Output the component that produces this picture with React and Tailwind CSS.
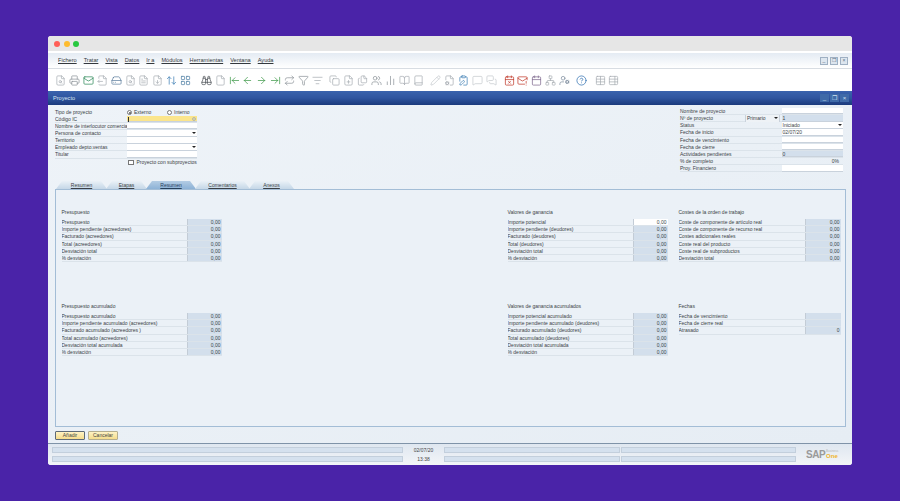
import React from 'react';
import {
  FileSearch, Printer, Mail, FileOutput, HardDrive, FileText, FileDown, ArrowUpDown, LayoutGrid, Binoculars, File,
  ArrowLeftToLine, ArrowLeft, ArrowRight, ArrowRightToLine, Repeat, Filter, ListFilter, Copy, FilePlus, Files, Users,
  BarChart2, BookOpen, Book, Pencil, FileCog, ClipboardPen, MessageSquare, MessagesSquare, CalendarX, MailWarning, Calendar,
  Network, UserCog, CircleHelp, Table, TableProperties, ChevronDown,
} from 'lucide-react';

const menu = ['Fichero', 'Tratar', 'Vista', 'Datos', 'Ir a', 'Módulos', 'Herramientas', 'Ventana', 'Ayuda'];

// toolbar groups, [icon, colour]
const gray = '#a9aeb4';
const toolbar = [
  { gap: 'ml-0', items: [[FileSearch, gray], [Printer, '#8f959b'], [Mail, '#2f8a5a'], [FileOutput, gray], [HardDrive, '#5f7f9f'], [FileSearch, gray], [FileText, gray], [FileDown, gray], [ArrowUpDown, '#3f7fb5'], [LayoutGrid, '#4f7fa5']] },
  { gap: 'ml-[7px]', items: [[Binoculars, '#4a4f55'], [File, gray], [ArrowLeftToLine, '#3f9a4a'], [ArrowLeft, '#3f9a4a'], [ArrowRight, '#3f9a4a'], [ArrowRightToLine, '#3f9a4a'], [Repeat, '#8f959b'], [Filter, '#8f959b'], [ListFilter, gray]] },
  { gap: 'ml-[4px]', items: [[Copy, gray], [FilePlus, gray], [Files, gray], [Users, '#8f959b'], [BarChart2, '#8f959b'], [BookOpen, gray], [Book, gray]] },
  { gap: 'ml-[4px]', items: [[Pencil, '#c5c9cd'], [FileCog, gray], [ClipboardPen, '#3f7fb5'], [MessageSquare, '#c5c9cd'], [MessagesSquare, '#c5c9cd']] },
  { gap: 'ml-[4px]', items: [[CalendarX, '#c0392b'], [MailWarning, '#c0392b'], [Calendar, '#7f6a8f'], [Network, gray], [UserCog, '#7f8f9f']] },
  { gap: 'ml-[3px]', items: [[CircleHelp, '#2f6fb0']] },
  { gap: 'ml-[5px]', items: [[Table, gray], [TableProperties, gray]] },
];

const leftFields = [
  { label: 'Código IC', kind: 'focus' },
  { label: 'Nombre de interlocutor comercial' },
  { label: 'Persona de contacto', drop: true },
  { label: 'Territorio' },
  { label: 'Empleado depto.ventas', drop: true },
  { label: 'Titular' },
];

const rightFields = [
  { label: 'Nombre de proyecto' },
  { label: 'Nº de proyecto', value: '1', ro: true, select: 'Primario' },
  { label: 'Status', value: 'Iniciado', drop: true },
  { label: 'Fecha de inicio', value: '02/07/20' },
  { label: 'Fecha de vencimiento' },
  { label: 'Fecha de cierre' },
  { label: 'Actividades pendientes', value: '0', ro: true },
  { label: '% de completo', plain: '0%' },
  { label: 'Proy. Financiero' },
];

const tabs = [
  { label: 'Resumen', w: 'w-[51px]' },
  { label: 'Etapas', w: 'w-[41px]' },
  { label: 'Resumen', w: 'w-[50px]', active: true },
  { label: 'Comentarios', w: 'w-[55px]' },
  { label: 'Anexos', w: 'w-[45px]' },
];

const Section = ({ title, rows, width, valueWidth, className }) => (
  <div className={`${width} ${className || ''}`}>
    <div className="h-[7px] mb-[3px] leading-[7px]">{title}</div>
    {rows.map((r, i) => (
      <div key={i} className="flex h-[7.2px] leading-[7px] border-b border-[#dbe3ea]">
        <span className="flex-1 whitespace-nowrap overflow-hidden">{r.label}</span>
        <span className={`${valueWidth} ${r.white ? 'bg-white' : 'bg-[#d3dfec]'} text-right pr-[1px] border-l border-[#c3ccd6]`}>{r.value}</span>
      </div>
    ))}
  </div>
);

const zero = (labels, white) => labels.map((label, i) => ({ label, value: '0,00', white: white && i === 0 }));

const Field = ({ f }) => (
  <div className={`relative flex-1 h-[6.4px] leading-[6px] pl-[1px] border-b border-[#c9d2dc] ${f.ro ? 'bg-[#d3dfec]' : 'bg-white'}`}>
    {f.value}
    {f.drop && <span className="absolute right-[1px] top-[2px] w-0 h-0 border-x-[2px] border-t-[2.5px] border-x-transparent border-t-[#222]" />}
  </div>
);

const StatusRow = ({ time }) => (
  <div className="flex items-center h-[7px] gap-[1px]">
    <div className="w-[351px] h-[6px] bg-[#d5e1ee] border border-[#c3cfdc]" />
    <div className="w-[39px] text-center leading-[6px] text-[#444]">{time}</div>
    <div className="w-[176px] h-[6px] bg-[#d5e1ee] border border-[#c3cfdc]" />
    <div className="w-[175px] h-[6px] bg-[#d5e1ee] border border-[#c3cfdc]" />
  </div>
);

export default function App() {
  return (
    <div className="h-[501px] w-[900px] bg-[#4a23a8] pt-[36px] px-[48px] overflow-hidden [font-family:'Liberation_Sans',sans-serif] text-[5px] text-[#3a3f45]">
      <div className="h-[429px] flex flex-col rounded-[3px] overflow-hidden bg-white">
        {/* mac title bar */}
        <div className="h-[15px] bg-[#e6e6e6] flex items-center pl-[6px] gap-[3.5px]">
          <span className="w-[6px] h-[6px] rounded-full bg-[#ff5f57]" />
          <span className="w-[6px] h-[6px] rounded-full bg-[#febc2e]" />
          <span className="w-[6px] h-[6px] rounded-full bg-[#28c840]" />
        </div>

        {/* menu */}
        <div className="h-[16px] mt-[2px] flex items-center pl-[10px] pr-[4px] bg-gradient-to-b from-[#e4ebf3] to-white border-b border-[#d8dde3] text-[5.6px] text-[#33383d]">
          {menu.map((m, i) => (
            <span key={i} className="mr-[7px] underline decoration-[0.4px] underline-offset-[1px]">{m}</span>
          ))}
          <div className="ml-auto flex gap-[2px]">
            {['_', '❐', '×'].map((c, i) => (
              <span key={i} className="w-[8px] h-[8px] flex items-center justify-center bg-[#dde6ef] border border-[#9fb0c3] text-[5px] leading-none text-[#5a6d82]">{c}</span>
            ))}
          </div>
        </div>

        {/* toolbar */}
        <div className="h-[22px] flex items-center pl-[6px] bg-white">
          {toolbar.map((g, gi) => (
            <div key={gi} className={`flex items-center ${g.gap}`}>
              {g.items.map(([Icon, color], i) => (
                <span key={i} className="w-[13.85px] flex justify-center">
                  <Icon size={11} color={color} strokeWidth={1.6} />
                </span>
              ))}
            </div>
          ))}
        </div>

        {/* form window */}
        <div className="h-[14px] bg-gradient-to-b from-[#3a63ad] via-[#2f559f] to-[#1b3a7c] flex items-center pl-[5px] pr-[3px] text-[5.6px] text-[#d8e4f2]">
          <span>Proyecto</span>
          <div className="ml-auto flex gap-[1px]">
            {['_', '❐', '×'].map((c, i) => (
              <span key={i} className="w-[9px] h-[8px] flex items-center justify-center bg-[#3f6aa8] text-[6px] leading-none text-[#cfe0f0]">{c}</span>
            ))}
          </div>
        </div>

        <div className="flex-1 flex flex-col bg-gradient-to-br from-[#eef3f8] to-[#e6edf4] border-b border-[#7f93a8] min-h-0">
          {/* header fields */}
          <div className="h-[76px] flex justify-between pl-[7px] pr-[9px] pt-[3px]">
            <div className="w-[142px] pt-[1px]">
              <div className="flex items-center h-[7px]">
                <span className="w-[72px]">Tipo de proyecto</span>
                <span className="w-[5px] h-[5px] rounded-full border border-[#777] bg-white flex items-center justify-center"><span className="w-[2px] h-[2px] rounded-full bg-[#555]" /></span>
                <span className="ml-[2px] w-[33px] underline-offset-1">Externo</span>
                <span className="w-[5px] h-[5px] rounded-full border border-[#777] bg-white" />
                <span className="ml-[2px]">Interno</span>
              </div>
              {leftFields.map((f, i) => (
                <div key={i} className="flex h-[7.1px] leading-[6.5px] border-b border-[#dbe3ea]">
                  <span className="w-[72px] whitespace-nowrap overflow-hidden">{f.label}</span>
                  <div className={`relative w-[70px] h-[6.4px] border-b border-[#c9d2dc] ${f.kind === 'focus' ? 'bg-[#fbe58c]' : 'bg-white'}`}>
                    {f.kind === 'focus' && <span className="absolute left-[1px] top-[0.5px] w-[0.6px] h-[5px] bg-[#333]" />}
                    {f.kind === 'focus' && <span className="absolute right-[1px] top-[1px] w-[4px] h-[4px] rounded-full bg-[#d9d4b0] border border-[#b9b9a0]" />}
                    {f.drop && <span className="absolute right-[1px] top-[2px] w-0 h-0 border-x-[2px] border-t-[2.5px] border-x-transparent border-t-[#222]" />}
                  </div>
                </div>
              ))}
              <div className="flex items-center h-[8px] pl-[73px]">
                <span className="w-[5.5px] h-[5.5px] border border-[#777] bg-white mr-[3px]" />
                <span className="whitespace-nowrap">Proyecto con subproyectos</span>
              </div>
            </div>

            <div className="w-[163px]">
              {rightFields.map((f, i) => (
                <div key={i} className="flex h-[7.15px] leading-[6.5px] border-b border-[#dbe3ea]">
                  <span className="w-[101.5px] whitespace-nowrap relative">
                    {f.label}
                    {f.select && (
                      <span className="absolute left-[65px] top-0 w-[35px] h-[6.4px] bg-[#eef2f6] border-x border-[#c9d2dc] pl-[1px]">
                        {f.select}
                        <span className="absolute right-[1px] top-[2px] w-0 h-0 border-x-[2px] border-t-[2.5px] border-x-transparent border-t-[#222]" />
                      </span>
                    )}
                  </span>
                  {f.plain ? <div className="flex-1 text-right pr-[4px]">{f.plain}</div> : <Field f={f} />}
                </div>
              ))}
            </div>
          </div>

          {/* tabs */}
          <div className="flex pl-[8px] h-[8px] text-[5px]">
            {tabs.map((t, i) => (
              <div
                key={i}
                className={`${t.w} -mr-[1px] text-center leading-[9px] [clip-path:polygon(6px_0,calc(100%-6px)_0,100%_100%,0_100%)] ${t.active ? 'bg-gradient-to-b from-[#b3cce4] to-[#8db2d6] text-[#26405c]' : 'bg-gradient-to-b from-[#eaf1f7] to-[#c5d7e7]'}`}
              >
                <span className="underline decoration-[0.3px]">{t.label}</span>
              </div>
            ))}
          </div>

          {/* tab panel */}
          <div className="h-[238px] mx-[6.5px] border border-[#a3bdd6] bg-[#ebf1f7] flex flex-col pl-[6px] pt-[19px]">
            <div className="flex h-[94px]">
              <Section width="w-[160px]" valueWidth="w-[35px]" title="Presupuesto" rows={zero(['Presupuesto', 'Importe pendiente (acreedores)', 'Facturado (acreedores)', 'Total (acreedores)', 'Desviación total', '% desviación'])} />
              <Section className="ml-[286px]" width="w-[160px]" valueWidth="w-[35px]" title="Valores de ganancia" rows={zero(['Importe potencial', 'Importe pendiente (deudores)', 'Facturado (deudores)', 'Total (deudores)', 'Desviación total', '% desviación'], true)} />
              <Section className="ml-[11px]" width="w-[162px]" valueWidth="w-[36px]" title="Costes de la orden de trabajo" rows={zero(['Coste de componente de artículo real', 'Coste de componente de recurso real', 'Costes adicionales reales', 'Coste real del producto', 'Coste real de subproductos', 'Desviación total'])} />
            </div>
            <div className="flex">
              <Section width="w-[160px]" valueWidth="w-[35px]" title="Presupuesto acumulado" rows={zero(['Presupuesto acumulado', 'Importe pendiente acumulado (acreedores)', 'Facturado acumulado (acreedores )', 'Total acumulado (acreedores)', 'Desviación total acumulada', '% desviación'])} />
              <Section className="ml-[286px]" width="w-[160px]" valueWidth="w-[35px]" title="Valores de ganancia acumulados" rows={zero(['Importe potencial acumulado', 'Importe pendiente acumulado (deudores)', 'Facturado acumulado (deudores)', 'Total acumulado (deudores)', 'Desviación total acumulada', '% desviación'])} />
              <Section className="ml-[11px]" width="w-[162px]" valueWidth="w-[36px]" title="Fechas" rows={[{ label: 'Fecha de vencimiento', value: '' }, { label: 'Fecha de cierre real', value: '' }, { label: 'Atrasado', value: '0' }]} />
            </div>
          </div>

          {/* buttons */}
          <div className="flex gap-[3px] pl-[7px] pt-[4px]">
            <button className="w-[30px] h-[9px] leading-[7px] rounded-[1px] border border-[#5f6b78] bg-gradient-to-b from-[#fff3c4] to-[#f5dc8c] text-[5px] text-[#444]">Añadir</button>
            <button className="w-[30px] h-[9px] leading-[7px] rounded-[1px] border border-[#b5ae8f] bg-gradient-to-b from-[#fff3c4] to-[#f5dc8c] text-[5px] text-[#444]">Cancelar</button>
          </div>
        </div>

        {/* status bar */}
        <div className="h-[21px] flex items-center pl-[4px] pr-[2px] bg-gradient-to-b from-[#dfe7f0] to-[#f3f5f8]">
          <div className="flex flex-col gap-[2px]">
            <StatusRow time="02/07/20" />
            <StatusRow time="13:38" />
          </div>
          <div className="ml-[10px] flex items-center">
            <span className="text-[10px] font-bold tracking-[-0.5px] leading-none text-[#9a9a9a]">SAP</span>
            <span className="ml-[1px] flex flex-col leading-none">
              <span className="text-[3px] text-[#b5b5b5]">Business</span>
              <span className="text-[6px] font-bold text-[#efb52c]">One</span>
            </span>
          </div>
        </div>
      </div>
    </div>
  );
}
